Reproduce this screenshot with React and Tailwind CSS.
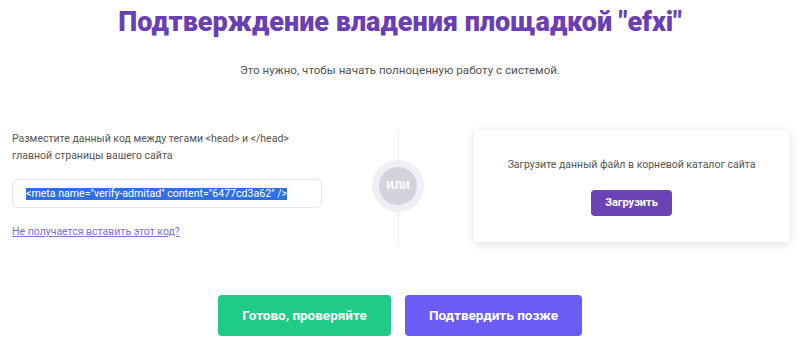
import React from 'react';

const Divider = () => (
  <div className="flex flex-col items-center w-[152px]">
    <div className="w-px h-[30px] bg-[#eeeef2]" />
    <div className="w-[52px] h-[52px] rounded-full bg-[#f0eff5] flex items-center justify-center">
      <div className="w-[38px] h-[38px] rounded-full bg-[#d4d2db] flex items-center justify-center text-white text-[11px] font-bold font-['Roboto',sans-serif]">
        ИЛИ
      </div>
    </div>
    <div className="w-px h-[33px] bg-[#eeeef2]" />
  </div>
);

export default function App() {
  return (
    <div className="w-[800px] h-[340px] bg-white overflow-hidden flex flex-col items-center pt-[4px] font-['Roboto',sans-serif]">
      <h1 className="text-[27px] leading-[36px] font-black text-[#6a3fb3]">
        Подтверждение владения площадкой "efxi"
      </h1>
      <p className="mt-[22px] text-[11.6px] leading-[16px] text-[#555]">
        Это нужно, чтобы начать полноценную работу с системой.
      </p>

      {/* Verification options */}
      <div className="mt-[52px] w-full flex items-start pl-[12px] pr-[11px]">
        <div className="w-[310px] flex flex-col">
          <p className="text-[10.5px] leading-[17px] text-[#555]">
            Разместите данный код между тегами &lt;head&gt; и &lt;/head&gt;
            <br />
            главной страницы вашего сайта
          </p>
          <div className="mt-[15px] h-[29px] border border-[#e6e6ea] rounded-[6px] flex items-center pl-[13px]">
            <span className="text-[10.6px] leading-[12px] text-white bg-[#2f70e6] whitespace-nowrap">
              &lt;meta name="verify-admitad" content="6477cd3a62" /&gt;
            </span>
          </div>
          <a href="#" className="mt-[16px] self-start text-[10.5px] leading-[16px] text-[#7b6fd8] underline">
            Не получается вставить этот код?
          </a>
        </div>

        <Divider />

        <div className="w-[315px] h-[112px] bg-white shadow-[0_2px_10px_rgba(0,0,0,0.12)] flex flex-col items-center pt-[27px]">
          <p className="text-[10.5px] leading-[16px] text-[#555]">
            Загрузите данный файл в корневой каталог сайта
          </p>
          <button className="mt-[17px] w-[81px] h-[26px] rounded-[4px] bg-[#6c43b5] text-white text-[11px] font-bold">
            Загрузить
          </button>
        </div>
      </div>

      <div className="mt-[50px] flex gap-[14px]">
        <button className="w-[173px] h-[41px] rounded-[4px] bg-[#1fcb86] text-white text-[13.5px] font-bold">
          Готово, проверяйте
        </button>
        <button className="w-[177px] h-[41px] rounded-[4px] bg-[#6b5cf6] text-white text-[13.5px] font-bold">
          Подтвердить позже
        </button>
      </div>
    </div>
  );
}
